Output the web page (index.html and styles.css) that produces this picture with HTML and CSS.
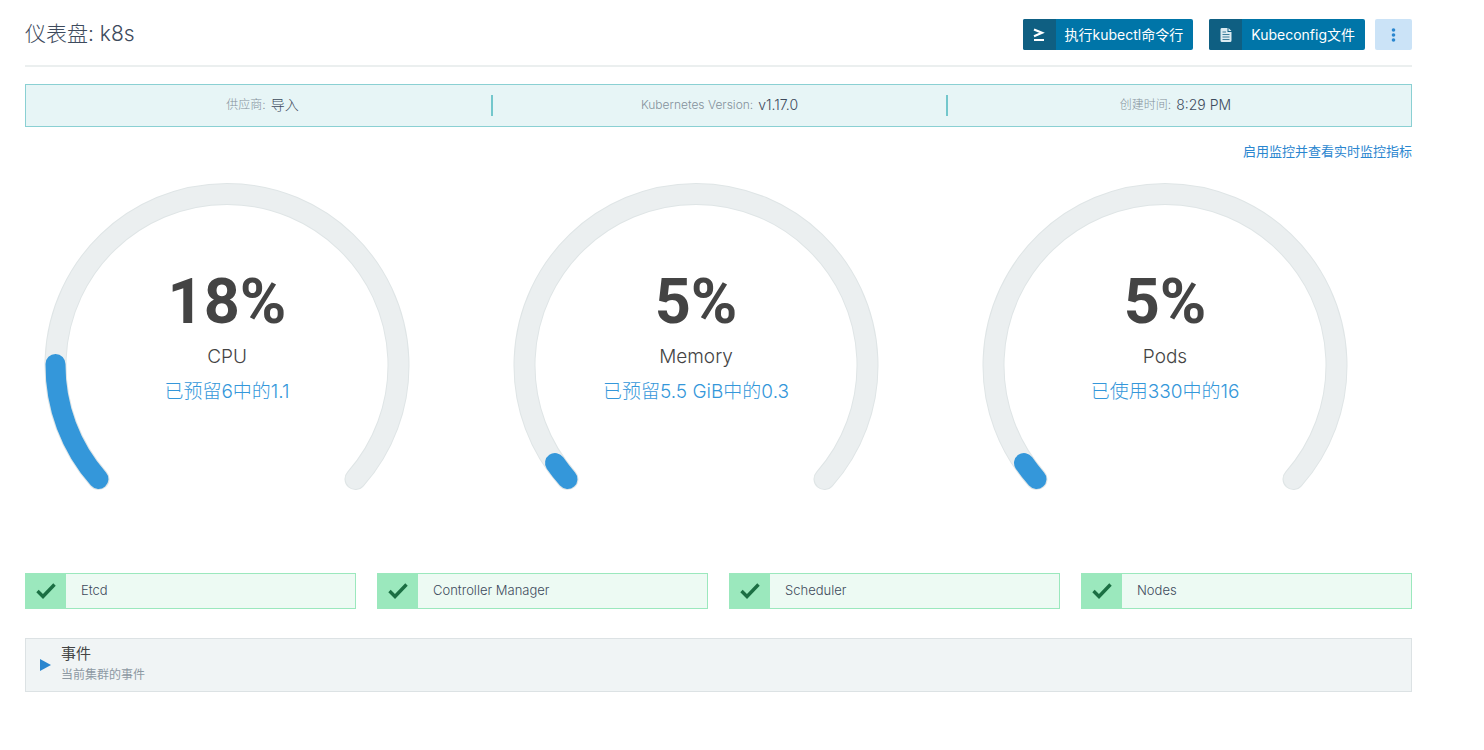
FILE: index.html
```html
<!DOCTYPE html>
<html lang="zh-CN">
<head>
<meta charset="utf-8">
<title>仪表盘: k8s</title>
<link rel="stylesheet" href="styles.css">
</head>
<body>
<main class="page">
  <header class="page-header">
    <h1 class="title">仪表盘: k8s</h1>
    <div class="actions">
      <button class="btn" type="button"><span class="btn-icon"><svg width="12" height="14" viewBox="0 0 12 14"><path d="M1 1.500 L9 4.800 L1 8.200" fill="none" stroke="#fff" stroke-width="2.200"/><path d="M1 12 H11" stroke="#fff" stroke-width="2"/></svg></span><span class="btn-label">执行kubectl命令行</span></button>
      <button class="btn" type="button"><span class="btn-icon"><svg width="12" height="14" viewBox="0 0 12 14"><path d="M1.500 0 H7.500 V4 H11.500 V12.500 Q11.500 14 10 14 H2 Q.5 14 .5 12.500 V1.500 Q.5 0 1.500 0 Z M8.500 0 L11.500 3 H8.500 Z" fill="#dcebf1"/><path d="M2.500 4 H6 M2.500 6.500 H9.500 M2.500 9 H9.500 M2.500 11.500 H9.500" stroke="#3f7f9c" stroke-width="1.200"/></svg></span><span class="btn-label">Kubeconfig文件</span></button>
      <button class="btn-more" type="button" aria-label="更多"><svg width="5" height="14" viewBox="0 0 5 14" fill="#2a86cf"><circle cx="2.500" cy="2" r="1.800"/><circle cx="2.500" cy="7" r="1.800"/><circle cx="2.500" cy="12" r="1.800"/></svg></button>
    </div>
  </header>

  <section class="banner">
    <div class="fact"><span class="fact-label">供应商:</span> <span class="fact-value">导入</span></div>
    <div class="fact"><span class="fact-label">Kubernetes Version:</span> <span class="fact-value">v1.17.0</span></div>
    <div class="fact"><span class="fact-label">创建时间:</span> <span class="fact-value">8:29 PM</span></div>
  </section>

  <p class="monitor"><a href="#">启用监控并查看实时监控指标</a></p>

  <section class="gauges">
    <svg class="gauge" viewBox="0 0 404 324">
      <path class="track-edge" d="M73.500 306 A171.500 171.500 0 1 1 330.500 306"/>
      <path class="track" d="M73.500 306 A171.500 171.500 0 1 1 330.500 306"/>
      <path class="value" d="M73.500 306 A171.500 171.500 0 0 1 30.500 191"/>
      <text class="percent" x="202" y="150">18%</text>
      <text class="name" x="202" y="190">CPU</text>
      <text class="usage" x="202" y="225">已预留6中的1.1</text>
    </svg>
    <svg class="gauge" viewBox="0 0 404 324">
      <path class="track-edge" d="M73.500 306 A171.500 171.500 0 1 1 330.500 306"/>
      <path class="track" d="M73.500 306 A171.500 171.500 0 1 1 330.500 306"/>
      <path class="value" d="M73.500 306 A171.500 171.500 0 0 1 61 290"/>
      <text class="percent" x="202" y="150">5%</text>
      <text class="name" x="202" y="190">Memory</text>
      <text class="usage" x="202" y="225">已预留5.5 GiB中的0.3</text>
    </svg>
    <svg class="gauge" viewBox="0 0 404 324">
      <path class="track-edge" d="M73.500 306 A171.500 171.500 0 1 1 330.500 306"/>
      <path class="track" d="M73.500 306 A171.500 171.500 0 1 1 330.500 306"/>
      <path class="value" d="M73.500 306 A171.500 171.500 0 0 1 61 290"/>
      <text class="percent" x="202" y="150">5%</text>
      <text class="name" x="202" y="190">Pods</text>
      <text class="usage" x="202" y="225">已使用330中的16</text>
    </svg>
  </section>

  <section class="statuses">
    <div class="status"><span class="status-icon"><svg width="20" height="16" viewBox="0 0 20 16"><path d="M1.500 8 L7 13.500 L18.500 1.500" fill="none" stroke="#1b6f43" stroke-width="3.400"/></svg></span><span class="status-name">Etcd</span></div>
    <div class="status"><span class="status-icon"><svg width="20" height="16" viewBox="0 0 20 16"><path d="M1.500 8 L7 13.500 L18.500 1.500" fill="none" stroke="#1b6f43" stroke-width="3.400"/></svg></span><span class="status-name">Controller Manager</span></div>
    <div class="status"><span class="status-icon"><svg width="20" height="16" viewBox="0 0 20 16"><path d="M1.500 8 L7 13.500 L18.500 1.500" fill="none" stroke="#1b6f43" stroke-width="3.400"/></svg></span><span class="status-name">Scheduler</span></div>
    <div class="status"><span class="status-icon"><svg width="20" height="16" viewBox="0 0 20 16"><path d="M1.500 8 L7 13.500 L18.500 1.500" fill="none" stroke="#1b6f43" stroke-width="3.400"/></svg></span><span class="status-name">Nodes</span></div>
  </section>

  <button class="accordion" type="button" aria-expanded="false">
    <svg width="11" height="12" viewBox="0 0 11 12"><path d="M0 0 L11 6 L0 12 Z" fill="#2a86cf"/></svg>
    <span class="accordion-text"><span class="accordion-title">事件</span><span class="accordion-note">当前集群的事件</span></span>
  </button>
</main>
</body>
</html>
```
FILE: styles.css
```css
* { box-sizing: border-box; }

body {
  margin: 0;
  background: #fff;
  color: #3d4a5c;
  font-family: Inter, "Noto Sans CJK SC", sans-serif;
  font-size: 14px;
  font-weight: 300;
}

button { font-family: inherit; cursor: pointer; }
svg { display: block; }

.page { padding: 0 72px 24px 25px; }

.page-header {
  display: flex;
  align-items: center;
  justify-content: space-between;
  height: 67px;
  border-bottom: 2px solid #ebefef;
}
.title { margin: 0; padding-bottom: 2px; font-size: 21px; font-weight: 300; }
.actions { display: flex; padding-top: 4px; }

.btn {
  display: flex;
  height: 31px;
  margin-right: 16px;
  padding: 0;
  border: 0;
  border-radius: 2px;
  background: #0075a8;
  color: #fff;
  font-size: 14px;
  font-weight: 400;
  overflow: hidden;
}
.btn + .btn { margin-right: 10px; }
.btn-icon {
  display: flex;
  align-items: center;
  justify-content: center;
  width: 33px;
  height: 100%;
  background: #0f5f82;
}
.btn-label { padding: 0 10px 0 9px; line-height: 31px; }
.btn-more {
  display: flex;
  align-items: center;
  justify-content: center;
  width: 37px;
  height: 31px;
  border: 0;
  border-radius: 2px;
  background: #cbe3f7;
}

.banner {
  display: grid;
  grid-template-columns: 46fr 45fr 46fr;
  margin-top: 17px;
  padding: 10px 0;
  border: 1px solid #8ad0d3;
  background: #e7f5f6;
}
.fact {
  display: flex;
  align-items: center;
  justify-content: center;
  gap: 5px;
  height: 21px;
  line-height: 20px;
  padding-bottom: 2px;
}
.fact:first-child { padding-left: 8px; }
.fact:last-child { padding-right: 8px; }
.fact + .fact { border-left: 2px solid #73c7cc; }
.fact-label { color: #84919b; font-size: 12px; }
.fact-value { font-size: 14px; }

.monitor { margin: 14px 0 0; font-size: 13px; line-height: 20px; text-align: right; }
.monitor a { color: #2a86cf; font-weight: 400; text-decoration: none; }

.gauges {
  display: grid;
  grid-template-columns: repeat(3, 1fr);
  gap: 65px;
  padding: 12px 45px 0 0;
}
.gauge { width: 100%; height: auto; }
.track-edge, .track, .value { fill: none; stroke-linecap: round; }
.track-edge { stroke: #dfe5e6; stroke-width: 22; }
.track { stroke: #ebeff0; stroke-width: 20; }
.value { stroke: #3497da; stroke-width: 20; }
.gauge text { text-anchor: middle; }
.percent { fill: #444; font-family: Roboto, sans-serif; font-size: 63px; font-weight: 700; }
.name { fill: #444; font-size: 19px; }
.usage { fill: #3497da; font-size: 19px; }

.statuses {
  display: grid;
  grid-template-columns: repeat(4, 1fr);
  gap: 21px;
  margin-top: 76px;
}
.status {
  display: flex;
  height: 36px;
  border: 1px solid #9be8bd;
  background: #edfaf3;
}
.status-icon {
  display: flex;
  align-items: center;
  justify-content: center;
  width: 40px;
  background: #9be8bd;
}
.status-name { padding-left: 15px; font-size: 13px; line-height: 32px; }

.accordion {
  display: flex;
  align-items: center;
  gap: 10px;
  width: 100%;
  height: 54px;
  margin-top: 29px;
  padding: 0 14px;
  border: 1px solid #dce2e4;
  background: #f0f4f5;
  text-align: left;
}
.accordion-text { display: flex; flex-direction: column; padding-bottom: 2px; font-weight: 400; }
.accordion-title { color: #444; font-size: 15px; line-height: 22px; }
.accordion-note { color: #8d99a3; font-size: 12px; line-height: 20px; }
```
